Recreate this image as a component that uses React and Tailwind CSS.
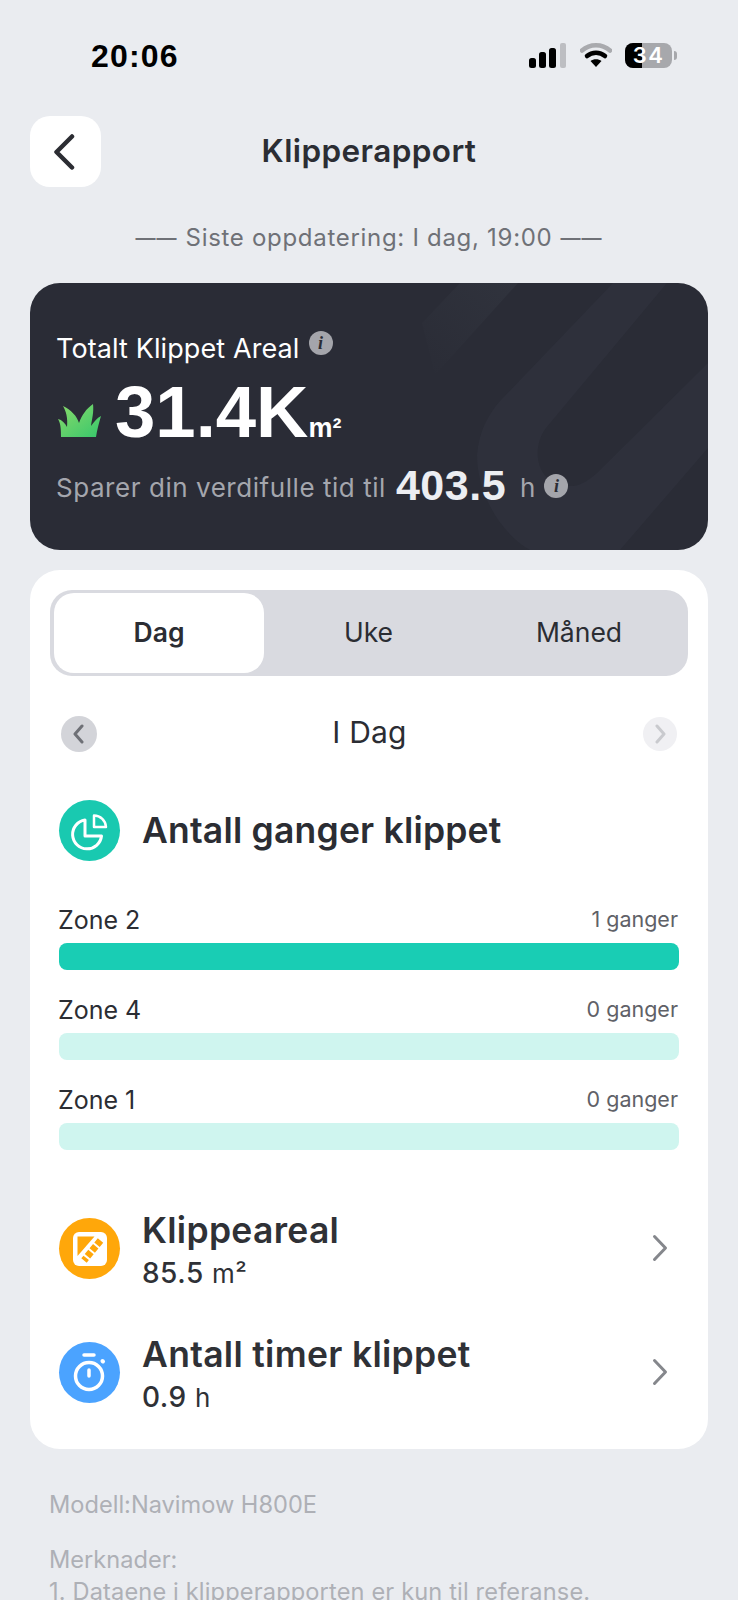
const Info = () => (
  <span className="inline-flex w-[24px] h-[24px] rounded-full bg-[#a4a5ab] items-center justify-center text-[#2a2c35] text-[18px] font-bold italic font-['Liberation_Serif',serif] leading-none">i</span>
);

const Chevron = ({ color = "#2c2d33", w = 3.5, d = "M9 2 L2 10 L9 18" }) => (
  <svg width="12" height="20" viewBox="0 0 12 20" fill="none">
    <path d={d} stroke={color} strokeWidth={w} strokeLinecap="round" strokeLinejoin="round" />
  </svg>
);

const Bar = ({ name, val, fill }) => (
  <div>
    <div className="flex justify-between items-center h-[24px] mb-[10px]">
      <span className="text-[25px] text-[#2b2d33] -ml-[1px]">{name}</span>
      <span className="text-[21.5px] text-[#5f6167] -mt-[3px] mr-[1px]">{val}</span>
    </div>
    <div className={`h-[27px] rounded-[8px] ${fill ? "bg-[#19cdb4]" : "bg-[#cff5ef]"}`} />
  </div>
);

const Row = ({ color, icon, title, num, unit, cls }) => (
  <div className={`flex items-center ${cls}`}>
    <div className="w-[61px] h-[61px] rounded-full shrink-0" style={{ backgroundColor: color }}>{icon}</div>
    <div className="ml-[22px] flex-1 pt-[4px]">
      <div className="text-[35.5px] font-semibold text-[#2f3136] leading-[42px] tracking-[0.3px]">{title}</div>
      <div className="mt-[5px] text-[28px] leading-[32px] text-[#2f3136] tracking-[0.5px]"><span className="font-medium">{num}</span> <span className="text-[26px]">{unit}</span></div>
    </div>
    <div className="mr-[11px]">
      <svg width="16" height="28" viewBox="0 0 16 28" fill="none"><path d="M2.5 2.5 L13.5 14 L2.5 25.5" stroke="#85878c" strokeWidth="3" strokeLinecap="round" strokeLinejoin="round" /></svg>
    </div>
  </div>
);

export default function App() {
  return (
    <div className="w-[738px] h-[1600px] overflow-hidden bg-[#eaecf0] font-['Inter',sans-serif]">
      {/* status bar */}
      <div className="pt-[36px] flex items-center justify-between h-[74px] pl-[91px] pr-[61px]">
        <span className="text-[32px] font-semibold text-black leading-[38px] font-['Liberation_Sans',sans-serif] tracking-[1.2px] mt-[1px]">20:06</span>
        <div className="flex items-center">
          <svg width="37" height="25" viewBox="0 0 37 25">
            <rect x="0" y="15" width="7" height="10" rx="2.5" fill="#000" />
            <rect x="10" y="9" width="7" height="16" rx="2.5" fill="#000" />
            <rect x="20" y="5" width="7" height="20" rx="2.5" fill="#000" />
            <rect x="31" y="0" width="6" height="25" rx="2" fill="#bdbec2" />
          </svg>
          <svg className="ml-[14px]" width="32" height="24" viewBox="0 0 32 24" fill="none">
            <path d="M2 7.5 C10 0.5 22 0.5 30 7.5" stroke="#a9aaae" strokeWidth="4.5" strokeLinecap="round" />
            <path d="M7 13 C12 8.5 20 8.5 25 13" stroke="#000" strokeWidth="4.5" strokeLinecap="round" />
            <path d="M16 24 L10.5 18 C13.5 15.5 18.5 15.5 21.5 18 Z" fill="#000" />
          </svg>
          <div className="ml-[13px] relative w-[47px] h-[25px] rounded-[8px] overflow-hidden bg-[#a7a8ac]">
            <div className="absolute left-0 top-0 bottom-0 w-[17px] bg-black" />
            <div className="absolute inset-0 flex items-center justify-center text-white text-[22px] font-semibold leading-none tracking-[1.5px] font-['Inter',sans-serif]">34</div>
          </div>
          <div className="ml-[2px] w-[3px] h-[9px] rounded-r-full bg-[#a7a8ac]" />
        </div>
      </div>

      {/* header */}
      <div className="mt-[42px] grid grid-cols-[1fr_auto_1fr] items-center px-[30px]">
        <div className="w-[71px] h-[71px] rounded-[20px] bg-white flex items-center pl-[23px]">
          <svg width="22" height="36" viewBox="0 0 22 36" fill="none"><path d="M19 2.5 L3.5 18 L19 33.5" stroke="#2c2d33" strokeWidth="4.5" strokeLinecap="round" strokeLinejoin="round" /></svg>
        </div>
        <div className="text-[31.5px] font-semibold text-[#2b2d33] tracking-[0.4px] -mt-[1px]">Klipperapport</div>
        <div />
      </div>

      <div className="mt-[34px] h-[34px] flex items-center justify-center text-[24px] text-[#6f7177] tracking-[0.7px] whitespace-pre">
        <span className="text-[20px] font-medium tracking-[1px]">——</span>
        <span className="mx-[8px]">Siste oppdatering: I dag, 19:00</span>
        <span className="text-[20px] font-medium tracking-[1px]">——</span>
      </div>

      {/* dark card */}
      <div className="relative mt-[28px] mx-[30px] h-[267px] rounded-[30px] bg-[#2a2c36] overflow-hidden pl-[27px] pt-[47px]">
        <svg className="absolute inset-0" width="678" height="267" viewBox="0 0 678 267" fill="none">
          <defs>
            <linearGradient id="band" x1="1" y1="0" x2="0" y2="1"><stop offset="0" stopColor="#30333d" /><stop offset="1" stopColor="#2a2c36" /></linearGradient>
          </defs>
          <path d="M392 40 L430 0 L488 0 L405 92 Z" fill="url(#band)" />
          <path d="M447 172 C449 148 458 132 470 118 L583 0 L637 0 L516 145 C500 166 506 205 543 203 C552 202 560 196 567 190 L678 80 L678 165 L590 267 L500 267 C470 250 447 210 447 172 Z" fill="#2e303b" />
        </svg>
        <div className="relative">
          <div className="flex items-start h-[38px]">
            <span className="text-[27px] text-white leading-[38px] tracking-[0.1px] -ml-[1px]">Totalt Klippet Areal</span>
            <span className="ml-[9px] mt-[1px]"><Info /></span>
          </div>
          <div className="flex items-end h-[76px] mt-[6px]">
            <svg className="mb-[13px] ml-[1px]" width="44" height="33" viewBox="0 0 44 33">
              <defs>
                <linearGradient id="gr" x1="0" y1="0" x2="1" y2="1"><stop offset="0" stopColor="#8ada6a" /><stop offset="1" stopColor="#37c76c" /></linearGradient>
              </defs>
              <path d="M3 33 C3 27 3 20 0 15 C4 16 7 19 9 23 C10 14 8 7 5 2 C13 6 19 12 21 19 C24 11 28 5 35 0 C36 8 34 15 33 22 C36 18 39 14 43 12 C41 19 39 26 38 33 Z" fill="url(#gr)" />
            </svg>
            <span className="ml-[13px] text-[72.5px] font-bold text-white leading-[76px] font-['Liberation_Sans',sans-serif]">31.4K</span>
            <span className="mb-[8px] text-[27px] font-bold text-white leading-[28px] font-['Liberation_Sans',sans-serif]">m²</span>
          </div>
          <div className="flex items-center mt-[15px] h-[44px]">
            <span className="text-[26px] text-[#a4a6ad] tracking-[0.55px] -ml-[1px]">Sparer din verdifulle tid til</span>
            <span className="ml-[10px] text-[43px] font-bold text-[#eceef2] leading-[44px] font-['Liberation_Sans',sans-serif] tracking-[0.5px] -mt-[4px]">403.5</span>
            <span className="ml-[14px] text-[26px] text-[#a4a6ad]">h</span>
            <span className="ml-[9px] -mt-[2px]"><Info /></span>
          </div>
        </div>
      </div>

      {/* white card */}
      <div className="mt-[20px] mx-[30px] h-[879px] rounded-[30px] bg-white px-[29px] pt-[20px]">
        <div className="-mx-[9px] h-[86px] rounded-[22px] bg-[#d9dae0] p-[3px] flex text-[26.5px] text-[#2b2d33]">
          <div className="ml-[1px] w-[210px] rounded-[20px] bg-white flex items-center justify-center font-semibold">Dag</div>
          <div className="flex-1 flex items-center justify-center">Uke</div>
          <div className="w-[212px] flex items-center justify-center">Måned</div>
        </div>

        <div className="mt-[40px] h-[36px] flex items-center justify-between px-[2px]">
          <div className="w-[36px] h-[36px] rounded-full bg-[#d3d4d9] flex items-center justify-center pr-[1px]">
            <Chevron color="#6e7076" w={3} />
          </div>
          <span className="text-[30px] text-[#2b2d33] tracking-[0.2px] -ml-[1px] -mt-[3px]">I Dag</span>
          <div className="w-[34px] h-[34px] rounded-full bg-[#f0f0f3] flex items-center justify-center pl-[1px]">
            <Chevron color="#c9cace" w={3} d="M3 2 L10 10 L3 18" />
          </div>
        </div>

        <div className="mt-[48px] flex items-center">
          <div className="w-[61px] h-[61px] rounded-full bg-[#19c9b0] shrink-0">
            <svg width="61" height="61" viewBox="0 0 61 61" fill="none" stroke="#fff" strokeLinejoin="round">
              <path d="M26 20 A14.5 14.5 0 1 0 42.5 36 H26 Z" strokeWidth="3" />
              <path d="M35 15.5 A12 12 0 0 1 47 27 H35 Z" strokeWidth="2.5" />
            </svg>
          </div>
          <span className="ml-[22px] text-[35.5px] font-semibold text-[#2b2d33] tracking-[0.2px]">Antall ganger klippet</span>
        </div>

        <div className="mt-[48px] flex flex-col gap-[29px]">
          <Bar name="Zone 2" val="1 ganger" fill />
          <Bar name="Zone 4" val="0 ganger" />
          <Bar name="Zone 1" val="0 ganger" />
        </div>

        <Row
          cls="mt-[56px]"
          color="#ffa70a"
          title="Klippeareal"
          num="85.5"
          unit="m²"
          icon={
            <svg width="61" height="61" viewBox="0 0 61 61">
              <rect x="14" y="14" width="34" height="34" rx="6" fill="#fff" />
              <path d="M18.5 18.5 H35.5 L18.5 38 Z" fill="#ffa70a" />
              <path d="M41.5 22.5 L25 42.5" fill="none" stroke="#ffa70a" strokeWidth="7" strokeDasharray="5.5 2" />
            </svg>
          }
        />
        <Row
          cls="mt-[40px]"
          color="#4ba3ff"
          title="Antall timer klippet"
          num="0.9"
          unit="h"
          icon={
            <svg width="61" height="61" viewBox="0 0 61 61" fill="none" stroke="#fff" strokeLinecap="round">
              <circle cx="30" cy="34" r="13.5" strokeWidth="3.5" />
              <path d="M25 13 H35" strokeWidth="3.5" />
              <path d="M43.5 19 L44 19.5" strokeWidth="4" />
              <path d="M30 28 V34" strokeWidth="3.5" />
            </svg>
          }
        />
      </div>

      {/* footer */}
      <div className="pl-[49px] text-[23.6px] text-[#aeb0b6]">
        <div className="mt-[41px] h-[30px] leading-[30px]">Modell:Navimow H800E</div>
        <div className="mt-[25px] h-[30px] leading-[30px]">Merknader:</div>
        <div className="mt-[1px] leading-[32px] whitespace-nowrap tracking-[0.15px]">1. Dataene i klipperapporten er kun til referanse.</div>
      </div>
    </div>
  );
}
